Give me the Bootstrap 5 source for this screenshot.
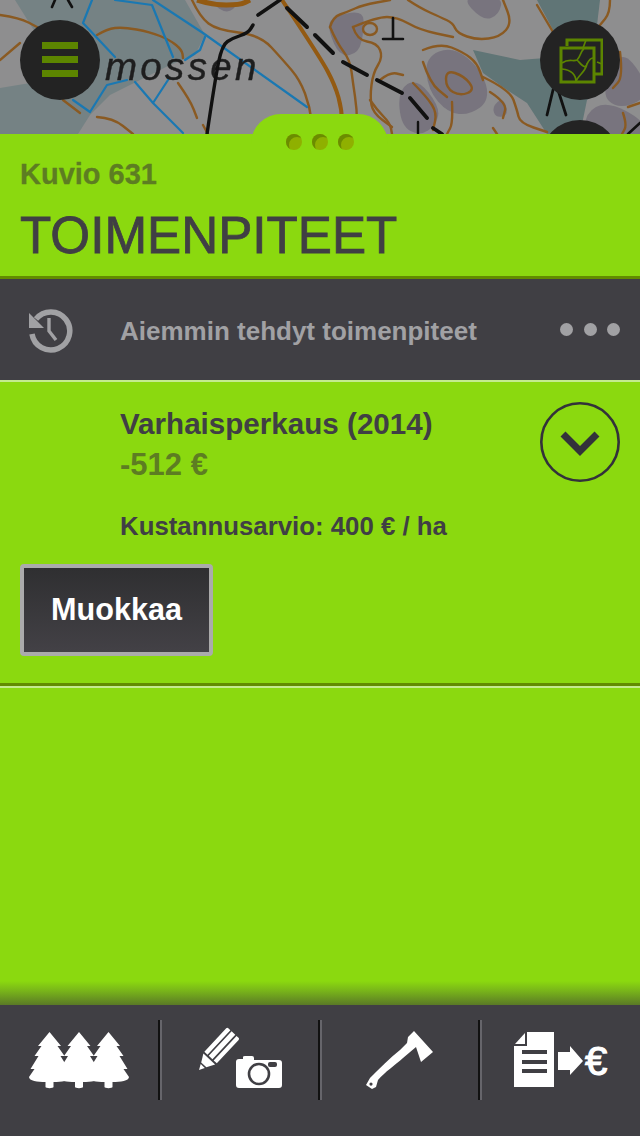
<!DOCTYPE html>
<html lang="fi">
<head>
  <meta charset="UTF-8">
  <meta name="viewport" content="width=device-width, initial-scale=1">
  <title>Toimenpiteet</title>
  <link href="https://cdn.jsdelivr.net/npm/bootstrap@5.3.0/dist/css/bootstrap.min.css" rel="stylesheet">
  <style>
    body {
      background: #8bd90f;
      font-family: "Liberation Sans", Arial, sans-serif;
      color: #403f44;
    }
    .app-page { width: 640px; height: 1136px; overflow: hidden; }

    /* map strip */
    .map-strip { height: 134px; background: #8e8e8f; overflow: visible; }
    .map-clip { height: 134px; overflow: hidden; }
    .map-art { display: block; width: 640px; height: 134px; filter: blur(.6px); }
    .map-btn {
      position: absolute;
      width: 80px; height: 80px;
      border-radius: 50%;
      background: #232323;
    }
    .map-btn-menu { left: 20px; top: 20px; }
    .map-btn-layers { left: 540px; top: 20px; }
    .map-btn-third { left: 540px; top: 120px; }
    .burger { width: 36px; height: 36px; margin: 22px; display: block; }
    .layer-ico { position: absolute; left: 19px; top: 18px; }
    .drag-tab {
      position: absolute;
      left: 251px; top: 114px;
      width: 137px; height: 36px;
      background: #8bd90f;
      border-radius: 30px 30px 0 0;
      z-index: 2;
    }
    .drag-dots { gap: 10px; padding-top: 20px; padding-left: 35px; }
    .drag-dot {
      width: 16px; height: 16px;
      border-radius: 50%;
      background: #8fb000;
      box-shadow: inset 3px 3px 0 #6b8c00;
    }

    /* panel heading */
    .panel-head {
      height: 145px;
      padding: 24px 20px 0;
      background: #8bd90f;
      border-bottom: 3px solid #628c00;
    }
    .kuvio { font-size: 29px; line-height: 33px; font-weight: 700; color: #5d7d22; -webkit-text-stroke: .3px #5d7d22; }
    .panel-title { font-size: 51.2px; line-height: 60px; font-weight: 400; margin: 15px 0 0; color: #403f44; -webkit-text-stroke: .8px #403f44; }

    /* history bar */
    .history-bar {
      height: 103px;
      background: #403f44;
      border-bottom: 2px solid #c4eb8e;
      color: #a1a1a4;
    }
    .history-ico { width: 120px; padding-left: 27px; }
    .history-text { font-size: 26px; font-weight: 700; padding-top: 3px; }
    .bar-dots { gap: 10.5px; padding-right: 20px; }
    .bar-dot { width: 13px; height: 13px; border-radius: 50%; background: #a1a1a4; }

    /* entry */
    .entry { height: 304px; border-bottom: 3px solid #628c00; }
    .entry-line { height: 2px; background: #c4eb8e; }
    .entry-top { padding: 22px 20px 0 120px; }
    .entry-name { font-size: 29.6px; line-height: 40px; font-weight: 700; color: #403f44; }
    .entry-price { font-size: 31px; line-height: 40px; font-weight: 700; color: #5d7d22; padding-top: 1px; }
    .entry-cost { font-size: 25.8px; line-height: 30px; font-weight: 700; margin-top: 26px; color: #403f44; }
    .chevron-btn { width: 80px; height: 80px; flex: none; margin-top: -2px; }
    .edit-btn {
      display: block;
      margin: 23px 0 0 20px;
      width: 193px; height: 92px;
      padding: 0;
      border: 4px solid #ababab;
      border-radius: 4px;
      background: linear-gradient(#2f2f31, #434146);
      color: #fff;
      font-size: 30.6px;
      font-weight: 700;
    }

    /* bottom nav */
    .spacer-green {
      background: linear-gradient(to bottom, #8bd90f 0, #8bd90f calc(100% - 24px), #78b41a calc(100% - 14px), #5a7a26 100%);
    }
    .tab-bar { height: 131px; background: #403f44; flex: none; }
    .tab-cell { width: 160px; height: 80px; margin-top: 15px; }
    .tab-cell + .tab-cell { border-left: 2px solid #111; position: relative; margin-left: -2px; width: 162px; }
    .tab-cell + .tab-cell::before {
      content: "";
      position: absolute;
      left: 0; top: 0;
      width: 2px; height: 80px;
      background: #66656b;
    }
    .tab-ico { display: block; width: 160px; height: 131px; margin-top: -15px; }
  </style>
</head>
<body>
<div class="app-page d-flex flex-column position-relative">

  <!-- map behind the panel -->
  <div class="map-strip position-relative flex-shrink-0">
    <div class="map-clip">
    <svg class="map-art" viewBox="0 0 640 134" fill="none">
      <!-- water and bog areas -->
      <path d="M15 0H185L205 35 195 55 170 65 140 80 110 95 90 115 78 134H0V88L60 78 40 40Z" fill="#758284"/>
      <path d="M537 0H600L597 25 570 32 553 30Z" fill="#607576"/>
      <path d="M473 50 520 60 545 58 600 90 587 100 580 134H547L527 103 507 90 483 73Z" fill="#607576"/>
      <g fill="#78747e">
        <polygon class="sm" points="331,17 363,10 364,30 359,53 340,57 328,30"/>
        <polygon class="sm" points="425,57 453,46 482,70 490,100 470,115 448,113 428,90"/>
        <polygon class="sm" points="398,90 417,78 440,107 436,125 420,136 401,126"/>
        <polygon class="sm" points="460,-4 503,-4 499,15 483,21"/>
        <polygon class="sm" points="620,48 645,78 645,100 617,109 601,93"/>
        <polygon class="sm" points="585,113 607,101 645,121 645,140 585,140"/>
        <polygon class="sm" points="492,107 503,97 509,115 496,118"/>
        <polygon class="sm" points="211,3 227,14 239,4"/>
      </g>
      <!-- contours -->
      <g stroke="#8a5a22" stroke-width="2.400" stroke-linecap="round" stroke-linejoin="round">
        <polyline class="sm" points="0,15 20,18 37,27"/>
        <polyline class="sm" points="0,60 20,43"/>
        <polyline class="sm" points="97,35 107,29 123,27 150,32 170,40 182,50 183,58"/>
        <polyline class="sm" points="63,100 80,113"/>
        <polyline class="sm" points="97,117 113,118 133,134"/>
        <polyline class="sm" points="178,83 190,100 197,118"/>
        <polyline class="sm" points="203,125 208,134"/>
        <polyline class="sm" points="192,0 200,17 217,30 260,35 283,60 300,80 310,107 313,134"/>
        <polyline class="sm" points="330,27 333,17 347,12 363,5 390,0"/>
        <polyline class="sm" points="408,0 420,8 440,17 453,23 457,33 477,40 500,37 512,23 503,0"/>
        <polyline class="sm" points="353,27 377,17 397,17 420,30 453,37"/>
        <polyline class="sm" points="353,27 357,40 377,43 383,57 373,73 370,97 373,113 392,127"/>
        <polyline class="sm" points="330,27 337,43 350,60 353,83 357,110 357,134"/>
        <ellipse cx="370" cy="29" rx="7" ry="6"/>
        <polyline class="sm" points="423,50 440,43 463,52 477,63 483,80"/>
        <polyline class="sm" points="423,62 430,83 447,97"/>
        <polygon class="sm" points="446,70 464,76 475,90 460,96 446,88"/>
        <polyline class="sm" points="483,77 510,90 517,110 520,123 547,132"/>
        <polyline class="sm" points="490,92 507,103 503,118"/>
        <polyline class="sm" points="452,102 453,123 447,134"/>
        <polyline class="sm" points="380,80 390,72 403,75"/>
        <polyline class="sm" points="413,83 427,97 437,113 433,130"/>
        <polyline class="sm" points="370,100 377,110 390,123 392,134"/>
        <polyline class="sm" points="493,128 497,134"/>
        <polyline class="sm" points="537,5 553,32"/>
        <polyline class="sm" points="610,0 610,13 600,25"/>
        <polyline class="sm" points="620,52 623,77 613,88"/>
        <polyline class="sm" points="640,103 628,107"/>
        <polyline class="sm" points="623,113 627,125 622,134"/>
      </g>
      <g stroke="#935a12">
        <polyline class="sm" stroke-width="4" points="282,0 320,57 335,85 342,110 342,134"/>
        <polyline class="sm" stroke-width="5" points="197,0 213,5 240,5 250,0"/>
      </g>
      <!-- ditches -->
      <g stroke="#1a78b2" stroke-width="2.200" stroke-linejoin="round" stroke-linecap="round">
        <path d="M92 0 83 23 115 57"/>
        <path d="M115 0 152 5 173 57M153 0 203 33 307 107"/>
        <path d="M205 37 200 50 185 60"/>
        <path d="M73 100 90 112 107 85 127 80"/>
        <path d="M135 82 153 103 183 133M153 103 168 80"/>
      </g>
      <text x="105" y="80" font-family="Liberation Sans" font-style="italic" font-size="38.500" letter-spacing="3.300" fill="#1e1e1e" stroke="#1e1e1e" stroke-width=".4">mossen</text>
      <g stroke="#111" fill="none" stroke-linecap="round">
        <polyline class="sm" stroke-width="3.400" points="207,134 215,80 222,45 233,38 248,33 253,25"/>
        <path d="M258 15 280 0" stroke-width="3.600"/>
        <path d="M287 8 307 27M315 35 333 53" stroke-width="4"/>
        <path d="M343 62 367 75M377 80 402 93M410 98 427 118M433 128 442 134" stroke-width="3.800"/>
        <path d="M393 18V39M383 39H403" stroke-width="2.600"/>
        <path d="M418 122V134" stroke-width="2.400"/>
        <path d="M553 90 547 115M558 90 566 115" stroke-width="2.800"/>
        <path d="M52 7 55 0M72 7 68 0" stroke-width="2.600"/>
        <path d="M628 134 640 123" stroke-width="2.600"/>
      </g>
    </svg>
    </div>

    <a class="map-btn map-btn-menu" href="#" aria-label="Valikko">
      <svg class="burger" viewBox="0 0 36 36"><path fill="#5c8500" d="M0 0H36V7H0ZM0 14H36V21H0ZM0 28H36V35H0Z"/></svg>
    </a>
    <a class="map-btn map-btn-layers" href="#" aria-label="Tasot">
      <svg class="layer-ico" width="44" height="46" viewBox="0 0 44 46" fill="none" stroke="#5c8500">
        <path d="M8 8V2H43V36H36" stroke-width="3"/>
        <rect x="2" y="10" width="33" height="34" stroke-width="3"/>
        <path d="M3 25C10 20 14 24 18 22 22 18 22 12 25 11M18 22C22 26 26 32 28 26 30 22 32 20 34 20M3 31C12 32 17 36 17 44M17 44C18 38 26 35 28 26M27 2 24 10M38 24 43 26" stroke-width="1.700"/>
      </svg>
    </a>
    <div class="map-btn map-btn-third"></div>
    <div class="drag-tab">
      <div class="drag-dots d-flex">
        <span class="drag-dot"></span><span class="drag-dot"></span><span class="drag-dot"></span>
      </div>
    </div>
  </div>

  <!-- panel heading -->
  <div class="panel-head position-relative flex-shrink-0">
    <div class="kuvio">Kuvio 631</div>
    <h1 class="panel-title">TOIMENPITEET</h1>
  </div>

  <!-- history row -->
  <div class="history-bar d-flex align-items-center flex-shrink-0">
    <div class="history-ico">
      <svg width="46" height="46" viewBox="0 0 46 46" fill="none">
        <path d="M9 12A19 19 0 1 1 5 27" stroke="#a1a1a4" stroke-width="5.500"/>
        <path d="M2 6V21H17Z" fill="#a1a1a4"/>
        <path d="M22 11V24L29 33" stroke="#a1a1a4" stroke-width="3.400"/>
      </svg>
    </div>
    <div class="history-text flex-grow-1">Aiemmin tehdyt toimenpiteet</div>
    <div class="bar-dots d-flex">
      <span class="bar-dot"></span><span class="bar-dot"></span><span class="bar-dot"></span>
    </div>
  </div>

  <!-- entry -->
  <div class="entry flex-shrink-0">
    <div class="entry-top d-flex justify-content-between">
      <div>
        <div class="entry-name">Varhaisperkaus (2014)</div>
        <div class="entry-price">-512 €</div>
      </div>
      <svg class="chevron-btn" viewBox="0 0 80 80" fill="none" stroke="#33323a">
        <circle cx="40" cy="40" r="38.700" stroke-width="2.600"/>
        <path d="M23 32 40 49 57 32" stroke-width="7"/>
      </svg>
    </div>
    <div class="entry-cost entry-top pt-0">Kustannusarvio: 400 € / ha</div>
    <button class="edit-btn" type="button">Muokkaa</button>
  </div>
  <div class="entry-line flex-shrink-0"></div>

  <div class="spacer-green flex-grow-1"></div>

  <!-- bottom nav -->
  <nav class="tab-bar d-flex">
    <div class="tab-cell">
      <svg class="tab-ico" viewBox="0 1005 160 131" fill="#fff">
        <defs>
          <path id="fir" d="M0 0 11.500 14H8L15 24H11L19 37H15L20.500 45C20.500 49 12 50 4 50V55C4 56.500 -4 56.500 -4 55V50C-12 50 -20.500 49 -20.500 45L-15 37H-19L-11 24H-15L-8 14H-11.500Z"/>
        </defs>
        <use href="#fir" x="49.500" y="1032"/>
        <use href="#fir" x="79" y="1032"/>
        <use href="#fir" x="108.500" y="1032"/>
      </svg>
    </div>
    <div class="tab-cell">
      <svg class="tab-ico" viewBox="160 1005 160 131" fill="#fff">
        <g transform="translate(199 1070) rotate(-47)">
          <path d="M0 0 5.500 -2.800V2.800Z"/>
          <path d="M7 -3.500 15 -8V8L7 3.500Z"/>
          <path d="M17 -8.500H49Q50.500 -8.500 50.500 -7V-4.200H17ZM17 -2.500H50.500V2.500H17ZM17 4.200H50.500V7Q50.500 8.500 49 8.500H17Z"/>
        </g>
        <path d="M236 1062Q236 1059 239 1059H243V1057Q243 1056 245 1056H252Q254 1056 254 1058V1060H279Q282 1060 282 1063V1085Q282 1088 279 1088H239Q236 1088 236 1085Z"/>
        <circle cx="259" cy="1074" r="10" fill="none" stroke="#403f44" stroke-width="2.600"/>
        <rect x="268" y="1062" width="9" height="5" rx="2" fill="#403f44"/>
      </svg>
    </div>
    <div class="tab-cell">
      <svg class="tab-ico" viewBox="320 1005 160 131" fill="#fff">
        <path fill-rule="evenodd" d="M414 1031 433 1052 421 1062 416 1047 403 1058C395 1065 385 1072 378 1080L376 1087 372 1089 366 1085 370 1078C380 1068 390 1058 400 1050L407 1043 408 1037ZM371 1082.500A1.600 1.600 0 1 0 371 1085.700 1.600 1.600 0 1 0 371 1082.500Z"/>
      </svg>
    </div>
    <div class="tab-cell">
      <svg class="tab-ico" viewBox="480 1005 160 131" fill="#fff">
        <path d="M514 1046H527V1032H554V1087H514Z"/>
        <path d="M515 1044 525 1033V1044Z"/>
        <path fill="#403f44" d="M522 1050H547V1054H522ZM522 1060H547V1064H522ZM522 1069H547V1073H522Z"/>
        <path d="M558 1052H570V1046L583 1061 570 1075V1070H558Z"/>
        <text x="585" y="1074.500" font-family="Liberation Sans" font-size="40" stroke="#fff" stroke-width="1.200">€</text>
      </svg>
    </div>
  </nav>
</div>
<script src="https://cdn.jsdelivr.net/npm/bootstrap@5.3.0/dist/js/bootstrap.bundle.min.js"></script>
<script>
  // round off the hand-traced map outlines
  document.querySelectorAll(".map-art .sm").forEach(function (el) {
    const pts = el.getAttribute("points").trim().split(/\s+/).map(function (p) { return p.split(",").map(Number); });
    const closed = el.tagName === "polygon";
    const mid = function (a, b) { return ((a[0] + b[0]) / 2) + " " + ((a[1] + b[1]) / 2); };
    const n = pts.length;
    let d = closed ? "M" + mid(pts[n - 1], pts[0]) : "M" + pts[0].join(" ");
    for (let i = closed ? 0 : 1; i < (closed ? n : n - 1); i++) {
      d += "Q" + pts[i].join(" ") + " " + mid(pts[i], pts[(i + 1) % n]);
    }
    d += closed ? "Z" : "L" + pts[n - 1].join(" ");
    const path = document.createElementNS("http://www.w3.org/2000/svg", "path");
    path.setAttribute("d", d);
    if (el.getAttribute("stroke-width")) path.setAttribute("stroke-width", el.getAttribute("stroke-width"));
    el.replaceWith(path);
  });
</script>
</body>
</html>
